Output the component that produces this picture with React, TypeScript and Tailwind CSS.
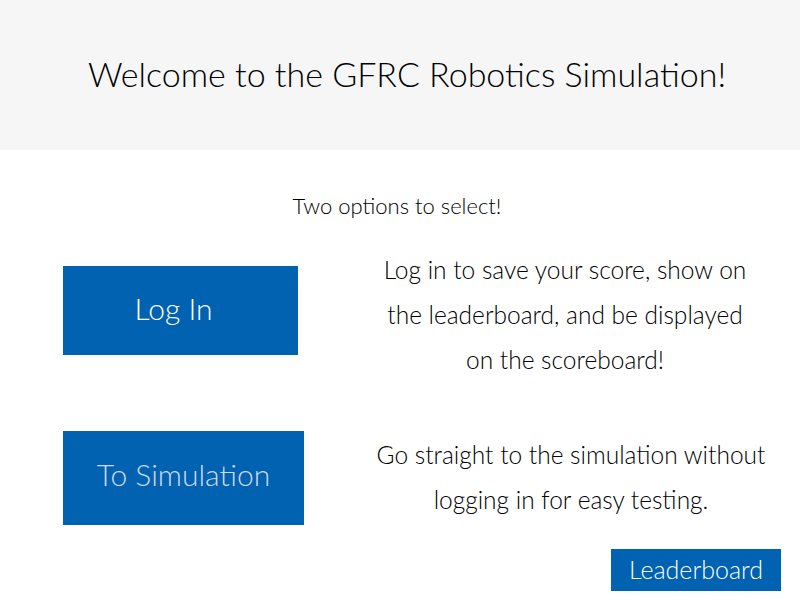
const font = { fontFamily: "Lato, 'Open Sans', sans-serif" };

const App = () => {
  return (
    <div className="w-[800px] h-[600px] bg-white text-black font-light overflow-hidden" style={font}>
      <header className="h-[150px] bg-[#f6f6f6] flex items-center justify-center">
        <h1 className="text-[34px] leading-none font-light pl-[14px] pb-[2px]">
          Welcome to the GFRC Robotics Simulation!
        </h1>
      </header>

      <p className="mt-[42px] text-[22px] leading-[28px] text-center w-[794px]">
        Two options to select!
      </p>

      <div className="mt-[27px] flex items-start pl-[63px]">
        <button className="mt-[19px] w-[235px] h-[89px] bg-[#0062b0] text-white text-[30px] font-light pr-[14px] pb-[5px]">
          Log In
        </button>
        <p className="ml-[67px] w-[400px] text-center text-[24.5px] leading-[45px]">
          Log in to save your score, show on
          <br />
          the leaderboard, and be displayed
          <br />
          on the scoreboard!
        </p>
      </div>

      <div className="mt-[49px] flex items-start pl-[63px]">
        <button className="w-[241px] h-[94px] bg-[#0062b0] text-[#cfd9ea] text-[30px] font-light pb-[8px]">
          To Simulation
        </button>
        <p className="ml-[67px] mt-[1px] w-[400px] text-center text-[24.5px] leading-[45px]">
          Go straight to the simulation without
          <br />
          logging in for easy testing.
        </p>
      </div>

      <div className="mt-[24px] pl-[611px]">
        <button className="w-[170px] h-[42px] bg-[#0062b0] text-white text-[25px] font-light">
          Leaderboard
        </button>
      </div>
    </div>
  );
};

export default App;
